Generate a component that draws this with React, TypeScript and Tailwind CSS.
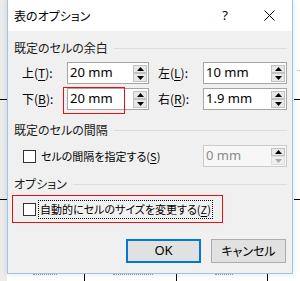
import React from 'react';

const jp = "font-['Noto_Sans_CJK_JP',sans-serif] [font-feature-settings:'palt']";

function Arrow({ up, color }: { up?: boolean; color: string }) {
  return (
    <svg width="7" height="4" viewBox="0 0 7 4">
      <path d={up ? 'M3.5 0L7 4H0z' : 'M0 0H7L3.5 4z'} fill={color} />
    </svg>
  );
}

function SpinBox({ value, width, disabled }: { value: string; width: string; disabled?: boolean }) {
  return (
    <div
      className={`flex h-[22px] items-stretch border ${width} ${
        disabled ? 'border-[#cccccc] bg-[#f7f7f7]' : 'border-[#a5a5a5] bg-white'
      }`}
    >
      <div
        className={`flex flex-1 items-center pl-[2px] font-['Noto_Sans',sans-serif] text-[13px] ${
          disabled ? 'text-[#8a8a8a]' : 'text-black'
        }`}
      >
        {value}
      </div>
      <div className="flex w-[15px] flex-col pt-[2px] pb-[1px] pr-px">
        <div className="flex h-[8px] items-center justify-center border border-[#c2c2c2] bg-[#e8e8e8]">
          <Arrow up color="#000" />
        </div>
        <div
          className={`flex h-[9px] items-center justify-center border ${
            disabled ? 'border-[#dddddd] bg-[#efefef]' : 'border-[#c2c2c2] bg-[#e8e8e8]'
          }`}
        >
          <Arrow color={disabled ? '#a8a8a8' : '#000'} />
        </div>
      </div>
    </div>
  );
}

function Label({ kanji, accel }: { kanji: string; accel: string }) {
  return (
    <div className={`flex w-[45px] items-center whitespace-nowrap text-[12px] text-black ${jp}`}>
      {kanji}(<span className="underline underline-offset-2">{accel}</span>):
    </div>
  );
}

function GroupHeader({ title }: { title: string }) {
  return (
    <div className="flex h-[16px] items-center gap-[6px]">
      <span className={`whitespace-nowrap text-[12px] leading-none text-[#1a1a1a] ${jp}`}>{title}</span>
      <div className="h-px flex-1 bg-[#dcdcdc]" />
    </div>
  );
}

function CheckBox() {
  return <div className="h-[13px] w-[13px] shrink-0 border border-[#333333] bg-white" />;
}

export default function App() {
  return (
    <div className="relative h-[281px] w-[300px] overflow-hidden bg-white">
      {/* document behind the dialog */}
      <div className="absolute left-0 top-0 h-full w-[7px] bg-[#ececec]" />
      <div className="absolute left-0 top-[99px] h-px w-[7px] bg-black" />
      <div className="absolute left-0 top-[199px] h-px w-[7px] bg-black" />
      <div className="absolute left-[294px] top-[99px] h-px w-[6px] bg-black" />
      <div className="absolute left-[294px] top-[199px] h-px w-[6px] bg-black" />
      <div className="absolute left-[297px] top-[70px] h-px w-[3px] border-t border-dotted border-[#b0b0b0]" />
      <div className="absolute left-[84px] top-[274px] h-[7px] w-px bg-black" />
      <div className="absolute left-[176px] top-[274px] h-[7px] w-px bg-black" />
      <div className="absolute left-[267px] top-[274px] h-[7px] w-px bg-black" />
      <div className="absolute left-[33px] top-[274px] w-[24px] border-t border-dotted border-[#9a9a9a]" />
      <div className="absolute left-[113px] top-[274px] w-[40px] border-t border-dotted border-[#9a9a9a]" />
      <div className="absolute left-[215px] top-[274px] w-[18px] border-t border-dotted border-[#9a9a9a]" />

      {/* dialog window */}
      <div className="absolute left-[7px] top-[-1px] flex h-[275px] w-[286px] flex-col border border-[#96c6f0] bg-[#f0f0f0] shadow-[0_0_6px_rgba(0,0,0,0.12)]">
        <div className="flex h-[31px] shrink-0 items-center bg-white pl-[6px]">
          <span className={`text-[12px] text-black ${jp}`}>表のオプション</span>
          <span className="ml-auto mr-[36px] font-['Noto_Sans',sans-serif] text-[13px] text-black">?</span>
          <svg width="11" height="11" viewBox="0 0 11 11" className="mr-[17px]">
            <path d="M0.5 0.5L10.5 10.5M10.5 0.5L0.5 10.5" stroke="#000" strokeWidth="1" />
          </svg>
        </div>

        <div className="flex flex-1 flex-col pl-[6px] pr-[5px]">
          <div className="mt-[9px]">
            <GroupHeader title="既定のセルの余白" />
          </div>

          <div className="mt-[6px] flex pl-[8px]">
            <Label kanji="上" accel="T" />
            <SpinBox value="20 mm" width="w-[82px]" />
            <div className="ml-[9px] flex">
              <Label kanji="左" accel="L" />
              <SpinBox value="10 mm" width="w-[84px]" />
            </div>
          </div>

          <div className="mt-[4px] flex pl-[8px]">
            <Label kanji="下" accel="B" />
            <SpinBox value="20 mm" width="w-[82px]" />
            <div className="ml-[9px] flex">
              <Label kanji="右" accel="R" />
              <SpinBox value="1.9 mm" width="w-[84px]" />
            </div>
          </div>

          <div className="mt-[12px]">
            <GroupHeader title="既定のセルの間隔" />
          </div>

          <div className="mt-[7px] flex items-center pl-[9px]">
            <CheckBox />
            <span className={`ml-[5px] whitespace-nowrap text-[11px] text-black ${jp}`}>
              セルの間隔を指定する(<span className="underline underline-offset-2">S</span>)
            </span>
            <div className="ml-auto">
              <SpinBox value="0 mm" width="w-[84px]" disabled />
            </div>
          </div>

          <div className="mt-[9px]">
            <GroupHeader title="オプション" />
          </div>

          <div className="ml-[-2px] mt-[3px] flex h-[28px] w-[211px] items-center border border-[#e81010] pl-[10px]">
            <CheckBox />
            <span
              className={`ml-[2px] flex h-[19px] items-center whitespace-nowrap border border-dotted border-black px-px text-[11px] text-black ${jp}`}
            >
              自動的にセルのサイズを変更する(<span className="underline underline-offset-2">Z</span>)
            </span>
          </div>

          <div className="mr-px mt-[16px] flex justify-end gap-[10px]">
            <button className="flex h-[24px] w-[75px] items-center justify-center border-2 border-[#0078d7] bg-[#e1e1e1] font-['Noto_Sans',sans-serif] text-[13px] text-black">
              OK
            </button>
            <button
              className={`flex h-[24px] w-[75px] items-center justify-center border border-[#adadad] bg-[#e1e1e1] text-[12px] text-black ${jp}`}
            >
              キャンセル
            </button>
          </div>
        </div>
      </div>

      {/* annotation box */}
      <div className="absolute left-[63px] top-[87px] h-[27px] w-[62px] border border-[#e81010]" />
    </div>
  );
}
